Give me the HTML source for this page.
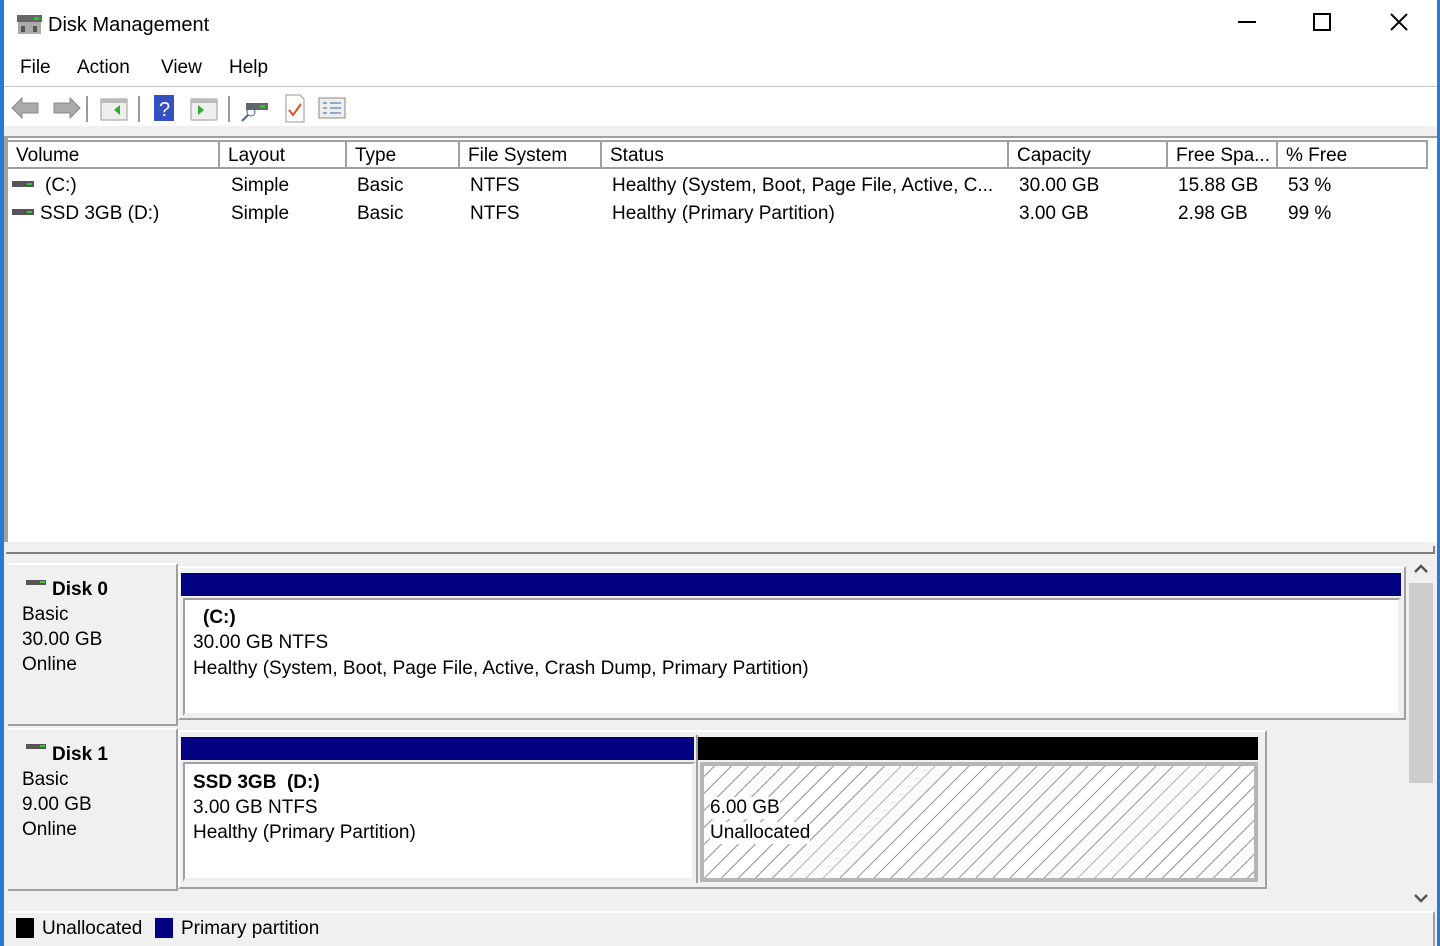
<!DOCTYPE html>
<html><head><meta charset="utf-8"><style>
*{box-sizing:border-box;margin:0;padding:0}
body{width:1440px;height:946px;overflow:hidden;background:#fff;font-family:"Liberation Sans",sans-serif;color:#000;position:relative;font-size:19px}
.a{position:absolute}
.t{position:absolute;white-space:nowrap;line-height:22px;margin-top:1px}
.hdr{position:absolute;top:140px;height:29px;background:#fff;border-right:2px solid #a0a0a0;border-bottom:2px solid #a0a0a0;border-top:2px solid #a0a0a0;padding-left:8px;line-height:27px}
.hatch{background:repeating-linear-gradient(135deg,#fff 0,#fff 7px,#999 7px,#999 8px,#fff 8px,#fff 12px)}
</style></head><body>
<div class="a" style="left:0;top:0;width:4px;height:946px;background:#2b79d1"></div>
<div class="a" style="right:0;top:0;width:3px;height:946px;background:#2b79d1"></div>
<svg class="a" style="left:16px;top:12px" width="28" height="24"><rect x="1" y="3" width="25" height="7" fill="#666"/><rect x="18" y="5" width="5" height="3" fill="#2c2"/><rect x="2" y="10" width="23" height="12" fill="#aaa"/><rect x="5" y="14" width="4" height="6" fill="#555"/><rect x="17" y="14" width="4" height="6" fill="#555"/></svg>
<div class="t" style="left:48px;top:13px;font-size:20px">Disk Management</div>
<div class="a" style="left:1238px;top:21px;width:18px;height:2px;background:#000"></div>
<div class="a" style="left:1313px;top:13px;width:18px;height:18px;border:2px solid #000"></div>
<svg class="a" style="left:1389px;top:12px" width="20" height="20"><path d="M2 2L18 18M18 2L2 18" stroke="#000" stroke-width="2"/></svg>
<div class="t" style="left:20px;top:56px">File</div>
<div class="t" style="left:77px;top:56px">Action</div>
<div class="t" style="left:161px;top:56px">View</div>
<div class="t" style="left:229px;top:56px">Help</div>
<div class="a" style="left:4px;top:86px;width:1433px;height:1px;background:#ccc"></div>
<svg class="a" style="left:8px;top:90px" width="360" height="36">
<path d="M4 18L14 8V13H30V23H14V28Z" fill="#aaa" stroke="#888"/>
<path d="M72 18L62 8V13H46V23H62V28Z" fill="#aaa" stroke="#888"/>
<rect x="78" y="6" width="2" height="26" fill="#999"/>
<rect x="93" y="9" width="26" height="21" fill="#eee" stroke="#999"/><rect x="93" y="9" width="26" height="4" fill="#bbb"/><path d="M112 15L106 20L112 25Z" fill="#3a3"/>
<rect x="130" y="6" width="2" height="26" fill="#999"/>
<rect x="146" y="5" width="20" height="26" fill="#3550c0"/><text x="151" y="26" fill="#fff" font-size="20" font-family="Liberation Sans">?</text>
<rect x="183" y="9" width="26" height="21" fill="#eee" stroke="#999"/><rect x="183" y="9" width="26" height="4" fill="#bbb"/><path d="M190 15L196 20L190 25Z" fill="#3a3"/>
<rect x="220" y="6" width="2" height="26" fill="#999"/>
<rect x="238" y="13" width="22" height="7" fill="#666"/><rect x="252" y="15" width="5" height="3" fill="#2c2"/><circle cx="243" cy="22" r="4" fill="none" stroke="#469"/><path d="M240 25L234 31" stroke="#469" stroke-width="2"/>
<path d="M278 5H292L296 9V32H278Z" fill="#fff" stroke="#999"/><path d="M281 20L285 25L293 14" stroke="#e05020" stroke-width="2" fill="none"/>
<rect x="311" y="8" width="26" height="20" fill="#eee" stroke="#888"/><path d="M315 13h4M315 18h4M315 23h4M322 13h11M322 18h11M322 23h11" stroke="#36a"/>
</svg>
<div class="a" style="left:4px;top:126px;width:1433px;height:12px;background:#f0f0f0;border-bottom:2px solid #a0a0a0"></div>
<div class="hdr" style="left:8px;width:212px">Volume</div>
<div class="hdr" style="left:220px;width:127px">Layout</div>
<div class="hdr" style="left:347px;width:113px">Type</div>
<div class="hdr" style="left:460px;width:142px">File System</div>
<div class="hdr" style="left:602px;width:407px">Status</div>
<div class="hdr" style="left:1009px;width:159px">Capacity</div>
<div class="hdr" style="left:1168px;width:110px">Free Spa...</div>
<div class="hdr" style="left:1278px;width:150px">% Free</div>
<div class="a" style="left:4px;top:138px;width:4px;height:404px;background:#a0a0a0"></div>
<div class="a" style="left:12px;top:181px;width:22px;height:6px;background:#555"></div><div class="a" style="left:27px;top:183px;width:5px;height:2px;background:#3c3"></div>
<div class="t" style="left:45px;top:174px">(C:)</div>
<div class="a" style="left:12px;top:209px;width:22px;height:6px;background:#555"></div><div class="a" style="left:27px;top:211px;width:5px;height:2px;background:#3c3"></div>
<div class="t" style="left:40px;top:202px">SSD 3GB (D:)</div>
<div class="t" style="left:231px;top:174px">Simple</div><div class="t" style="left:231px;top:202px">Simple</div>
<div class="t" style="left:357px;top:174px">Basic</div><div class="t" style="left:357px;top:202px">Basic</div>
<div class="t" style="left:470px;top:174px">NTFS</div><div class="t" style="left:470px;top:202px">NTFS</div>
<div class="t" style="left:612px;top:174px">Healthy (System, Boot, Page File, Active, C...</div>
<div class="t" style="left:612px;top:202px">Healthy (Primary Partition)</div>
<div class="t" style="left:1019px;top:174px">30.00 GB</div><div class="t" style="left:1019px;top:202px">3.00 GB</div>
<div class="t" style="left:1178px;top:174px">15.88 GB</div><div class="t" style="left:1178px;top:202px">2.98 GB</div>
<div class="t" style="left:1288px;top:174px">53 %</div><div class="t" style="left:1288px;top:202px">99 %</div>
<div class="a" style="left:4px;top:542px;width:1433px;height:404px;background:#f0f0f0"></div>
<div class="a" style="left:6px;top:546px;width:1429px;height:8px;border-bottom:2px solid #808080;border-right:2px solid #808080"></div>
<div class="a" style="left:8px;top:563px;width:170px;height:163px;border-right:2px solid #a0a0a0;border-bottom:2px solid #a0a0a0;border-top:2px solid #fff"></div>
<div class="a" style="left:8px;top:728px;width:170px;height:163px;border-right:2px solid #a0a0a0;border-bottom:2px solid #a0a0a0;border-top:2px solid #fff"></div>
<div class="a" style="left:26px;top:580px;width:20px;height:5px;background:#555"></div><div class="a" style="left:40px;top:581px;width:5px;height:2px;background:#3c3"></div>
<div class="t" style="left:52px;top:578px;font-weight:bold">Disk 0</div>
<div class="t" style="left:22px;top:603px">Basic</div><div class="t" style="left:22px;top:628px">30.00 GB</div><div class="t" style="left:22px;top:653px">Online</div>
<div class="a" style="left:26px;top:744px;width:20px;height:5px;background:#555"></div><div class="a" style="left:40px;top:745px;width:5px;height:2px;background:#3c3"></div>
<div class="t" style="left:52px;top:743px;font-weight:bold">Disk 1</div>
<div class="t" style="left:22px;top:768px">Basic</div><div class="t" style="left:22px;top:793px">9.00 GB</div><div class="t" style="left:22px;top:818px">Online</div>
<div class="a" style="left:178px;top:566px;width:1228px;height:154px;border:2px solid #fff;border-right-color:#a0a0a0;border-bottom-color:#a0a0a0"></div>
<div class="a" style="left:181px;top:573px;width:1220px;height:23px;background:#000080"></div>
<div class="a" style="left:183px;top:598px;width:1218px;height:118px;background:#fff;border-top:2px solid #a0a0a0;border-left:2px solid #a0a0a0;border-right:3px solid #f0f0f0;border-bottom:3px solid #f0f0f0"></div>
<div class="t" style="left:203px;top:606px;font-weight:bold">(C:)</div>
<div class="t" style="left:193px;top:631px">30.00 GB NTFS</div>
<div class="t" style="left:193px;top:657px">Healthy (System, Boot, Page File, Active, Crash Dump, Primary Partition)</div>
<div class="a" style="left:178px;top:730px;width:1089px;height:159px;border:2px solid #fff;border-right-color:#a0a0a0;border-bottom-color:#a0a0a0"></div>
<div class="a" style="left:181px;top:737px;width:513px;height:23px;background:#000080"></div>
<div class="a" style="left:183px;top:762px;width:513px;height:120px;background:#fff;border-top:2px solid #a0a0a0;border-left:2px solid #a0a0a0;border-right:4px solid #f0f0f0;border-bottom:4px solid #f0f0f0"></div>
<div class="t" style="left:193px;top:771px;font-weight:bold">SSD 3GB&nbsp; (D:)</div>
<div class="t" style="left:193px;top:796px">3.00 GB NTFS</div>
<div class="t" style="left:193px;top:821px">Healthy (Primary Partition)</div>
<div class="a" style="left:696px;top:735px;width:2px;height:148px;background:#a0a0a0"></div>
<div class="a" style="left:698px;top:737px;width:560px;height:23px;background:#000"></div>
<div class="a hatch" style="left:700px;top:762px;width:558px;height:120px;border:4px solid #b5b5b5"></div>
<div class="t" style="left:710px;top:796px;background:#fff">6.00 GB</div>
<div class="t" style="left:710px;top:821px;background:#fff">Unallocated</div>
<div class="a" style="left:1408px;top:556px;width:27px;height:355px;background:#f0f0f0"></div>
<svg class="a" style="left:1413px;top:563px" width="16" height="12"><path d="M2 9L8 3L14 9" stroke="#555" stroke-width="2.5" fill="none"/></svg>
<div class="a" style="left:1409px;top:583px;width:24px;height:200px;background:#cdcdcd"></div>
<svg class="a" style="left:1413px;top:892px" width="16" height="12"><path d="M2 3L8 9L14 3" stroke="#555" stroke-width="2.5" fill="none"/></svg>
<div class="a" style="left:8px;top:911px;width:1427px;height:35px;border-top:2px solid #fff;border-right:2px solid #a0a0a0"></div>
<div class="a" style="left:16px;top:918px;width:18px;height:20px;background:#000"></div>
<div class="t" style="left:42px;top:917px">Unallocated</div>
<div class="a" style="left:155px;top:918px;width:18px;height:20px;background:#000080"></div>
<div class="t" style="left:181px;top:917px">Primary partition</div>
</body></html>
